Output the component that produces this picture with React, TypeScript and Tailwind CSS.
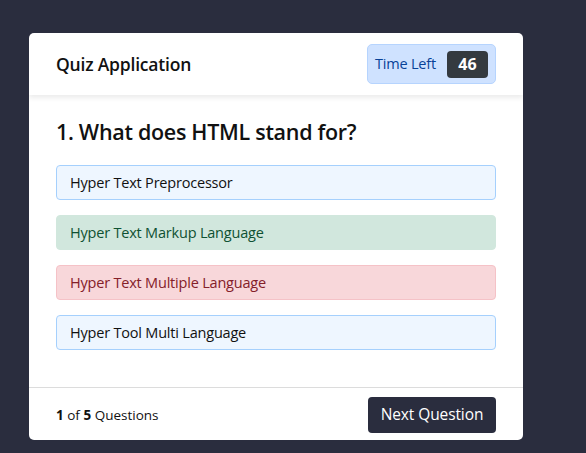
import { useState } from "react";

const options = [
  { text: "Hyper Text Preprocessor", state: "idle" },
  { text: "Hyper Text Markup Language", state: "correct" },
  { text: "Hyper Text Multiple Language", state: "wrong" },
  { text: "Hyper Tool Multi Language", state: "idle" },
];

const optionStyles: Record<string, string> = {
  idle: "border-[#a5d0fd] bg-[#eef6ff] text-[#111]",
  correct: "border-[#d1e7dd] bg-[#d1e7dd] text-[#0f5132]",
  wrong: "border-[#f5c2c7] bg-[#f8d7da] text-[#842029]",
};

export default function App() {
  const [timeLeft] = useState(46);

  return (
    <div
      className="min-h-[453px] bg-[#2a2d3e] pl-[29px] pt-[33px]"
      style={{ fontFamily: '"Open Sans", "Noto Sans", sans-serif' }}
    >
      <div className="w-[494px] overflow-hidden rounded-[5px] bg-white">
        <header className="relative flex h-[62px] items-center justify-between px-[27px] shadow-[0_3px_5px_rgba(0,0,0,0.08)]">
          <h1 className="text-[17.5px] font-semibold tracking-[-0.2px] text-[#111]">
            Quiz Application
          </h1>
          <div className="flex h-[40px] w-[129px] items-center justify-between rounded-[5px] border border-[#b6d4fe] bg-[#cfe2ff] pl-[7px] pr-[7px]">
            <span className="text-[14.5px] tracking-[-0.2px] text-[#084298]">Time Left</span>
            <span className="flex h-[27px] w-[41px] items-center justify-center rounded-[4px] bg-[#343a40] text-[16px] font-bold text-white">
              {timeLeft}
            </span>
          </div>
        </header>

        <main className="px-[27px] pb-[37px] pt-[22px]">
          <h2 className="text-[21.5px] font-semibold leading-[30px] tracking-[-0.3px] text-[#111]">
            1. What does HTML stand for?
          </h2>
          <ul className="mt-[18px] flex flex-col gap-[15px]">
            {options.map((o) => (
              <li
                key={o.text}
                className={`flex h-[35px] items-center rounded-[4px] border px-[13px] text-[14.5px] tracking-[-0.2px] ${optionStyles[o.state]}`}
              >
                {o.text}
              </li>
            ))}
          </ul>
        </main>

        <footer className="flex h-[53px] items-center justify-between border-t border-[#dcdcdc] px-[27px] pt-[2px]">
          <p className="text-[13.5px] text-[#111]">
            <b>1</b> of <b>5</b> Questions
          </p>
          <button
            type="button"
            className="h-[36px] w-[128px] rounded-[4px] bg-[#2a2d3e] text-[15.5px] tracking-[-0.1px] text-white"
          >
            Next Question
          </button>
        </footer>
      </div>
    </div>
  );
}
